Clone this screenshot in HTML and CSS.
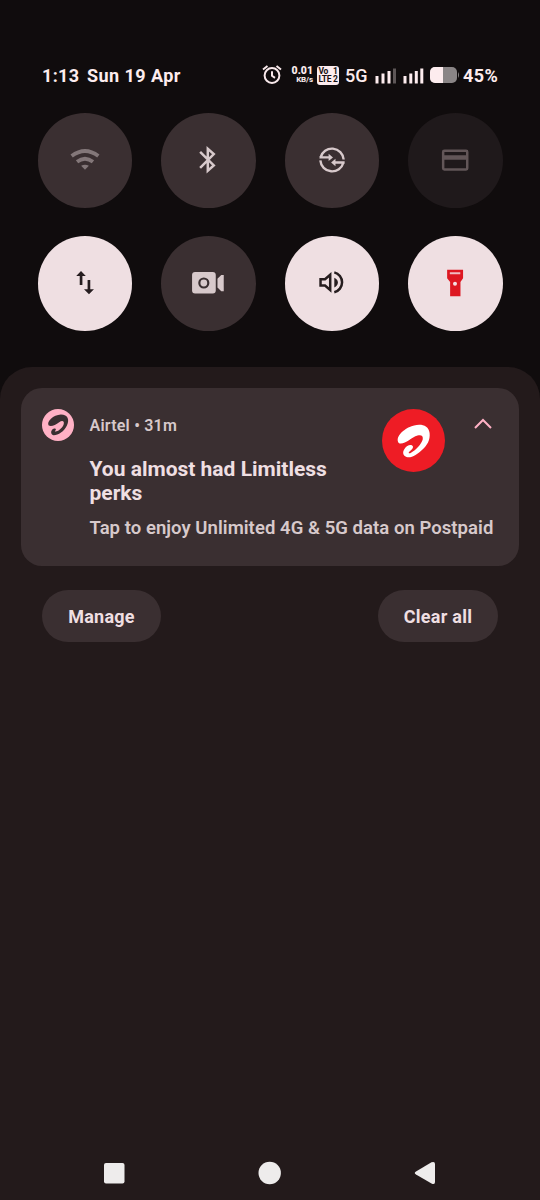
FILE: index.html
```html
<!DOCTYPE html>
<html lang="en">
<head>
<meta charset="utf-8">
<title>Notifications</title>
<link rel="stylesheet" href="styles.css">
</head>
<body>
<div class="screen">
  <header class="status">
    <span class="time">1:13</span>
    <span class="date">Sun 19 Apr</span>
    <svg class="alarm" width="20" height="20" viewBox="0 0 20 20" fill="none" stroke="#f8e8ea" stroke-width="2"><circle cx="10" cy="10.500" r="7.400"/><path d="M10 6.300V10.800L13 12.800M1 4.500L5.500 1M19 4.500L14.500 1"/></svg>
    <span class="speed"><b>0.01</b><small>KB/s</small></span>
    <span class="volte"><span>Vo</span><span>1</span><span>LTE</span><span>2</span></span>
    <span class="net">5G</span>
    <svg class="signals" width="49" height="17" viewBox="0 0 49 17" fill="#fdecee"><path d="M.5 9h3v7.500h-3zM6.500 6.500h3v10h-3zM12.500 4h3v12.500h-3zM28.500 9h3v7.500h-3zM34.300 6.500h3v10h-3zM39.800 4h3v12.500h-3zM45.300 1.500h3v15h-3z"/><path fill="#5d5657" d="M18 1.500h3v15h-3z"/></svg>
    <svg class="battery" width="29" height="16" viewBox="0 0 29 16"><rect width="27" height="16" rx="5" fill="#8a8586"/><path d="M13 0H5a5 5 0 0 0-5 5v6a5 5 0 0 0 5 5h8z" fill="#fdecee"/><path d="M28 5q2 3 0 6z" fill="#8a8586"/></svg>
    <span class="percent">45%</span>
  </header>

  <main class="tiles">
    <div class="tile"><svg viewBox="0 0 95 95" fill="none" stroke="#837779" stroke-width="3.800"><path d="M33.800 43.200Q47.200 33 60.600 43.200M39.200 49Q47.200 42.800 55.200 49"/><path d="M43.300 53Q47.200 50.800 51.100 53L47.200 57Z" fill="#837779" stroke="none"/></svg></div>
    <div class="tile"><svg viewBox="0 0 95 95" fill="none" stroke="#d7c9cb" stroke-width="2.500"><path d="M39.300 39L53 52.700L47 58V36L53 41.300L39.300 55"/></svg></div>
    <div class="tile"><svg viewBox="0 0 95 95" fill="none" stroke="#d7c9cb" stroke-width="2.400"><path d="M35.700 44.600A11.800 11.800 0 0 1 58.900 46.700M34.600 44.600H44.500M58.700 49.700A11.800 11.800 0 0 1 35.500 47.600M59.900 49.700H50"/><path d="M43.800 40.900L48.200 44.600L43.800 48.300ZM50.700 46L46.300 49.700L50.700 53.400Z" fill="#d7c9cb" stroke="none"/></svg></div>
    <div class="tile faint"><svg viewBox="0 0 95 95" fill="none" stroke="#625658" stroke-width="2.500"><rect x="35.300" y="38" width="24.200" height="18.800" rx="1.200"/><path d="M35.300 44.600h24.200" stroke-width="4.500"/></svg></div>
    <div class="tile on"><svg viewBox="0 0 95 95" fill="#261d1f"><path d="M43.200 35.200L48 40.200H44.600V49.300H41.900V40.200H38.400ZM51.200 58.500L46.200 53.400H49.800V44.200H52.500V53.400H56.200Z"/></svg></div>
    <div class="tile"><svg viewBox="0 0 95 95" fill="#d7c9cb"><rect x="31.200" y="36.200" width="23.800" height="21.500" rx="3"/><path d="M56.700 43L60.500 39.200H63V55.500H60.500L56.700 51.700Z"/><circle cx="43" cy="47.200" r="4.500" fill="none" stroke="#3a2f31" stroke-width="2.200"/></svg></div>
    <div class="tile on"><svg viewBox="0 0 95 95" fill="none" stroke="#261d1f" stroke-width="2.500"><path d="M35.700 43.500H40.200L45.400 39V54.200L40.200 49.800H35.700ZM49.500 36.500A10.300 10.300 0 0 1 49.500 56.500"/><path d="M49.500 42Q53.100 43.600 53.100 46.800T49.500 51.600Z" fill="#261d1f" stroke="none"/></svg></div>
    <div class="tile on"><svg viewBox="0 0 95 95"><path fill="#dd1721" d="M39.300 33.800H55.300V42.500L52.700 46.200V60.500H42.300V46.200L39.300 42.500Z"/><path fill="#efbdc2" d="M42 36.500h10.500v1.900H42z"/><circle cx="47.200" cy="47.900" r="2" fill="#f4dfe2"/></svg></div>
  </main>

  <section class="panel">
    <article class="card">
      <svg class="app-icon" viewBox="126 147 95 95"><circle cx="173.500" cy="194.500" r="47.500" fill="#ffb1c5"/><path fill="#3a2f31" d="M146 196C138 184 160 164 182 163C204 163 208 180 200 196C192 214 172 226 160 225C150 222 152 210 160 206C167 203 170 207 164 213C168 217 184 208 190 194C194 182 186 180 177 186C166 194 154 200 146 196Z"/></svg>
      <div class="message">
        <div class="source">Airtel • 31m</div>
        <h1>You almost had Limitless<br>perks</h1>
        <p>Tap to enjoy Unlimited 4G &amp; 5G data on Postpaid</p>
      </div>
      <svg class="large-icon" viewBox="0 0 63 63"><circle cx="31.500" cy="31.500" r="31.500" fill="#ee1c25"/><path fill="#fff" d="M17 34.300C12.500 28.500 21 21 27 18.200C36 14 46.500 14.800 47.600 24C48.400 31 45 36.500 40.500 40.500C35.500 45.500 29 49.500 24.500 48C20.500 46.500 20.300 42.500 22.800 39.500C25 35.600 29.500 35 30.900 37.200C31.500 39 29.500 41 27.500 42.400C25.800 44 27 44.800 29 43.700C34 41 39.500 35 40.700 30.500C41.500 26.500 39 25.500 35.500 26.500C29 28.300 23 36 17 34.300Z"/></svg>
      <svg class="chevron" width="18" height="12" viewBox="0 0 18 12" fill="none" stroke="#ffb1c5" stroke-width="2"><path d="M1 10L9 2L17 10"/></svg>
    </article>
    <div class="actions"><button class="manage">Manage</button><button class="clear">Clear all</button></div>
  </section>

  <nav class="nav">
    <svg width="332" height="24" viewBox="0 0 332 24" fill="#eeecec"><rect x="0" y="2" width="20.500" height="20.500" rx="2"/><circle cx="165.700" cy="12" r="11.200"/><path d="M312 10.500L327.500 1.300Q331 0 331 3V21Q331 24 327.500 22.500L312 13.500Q309.500 12 312 10.500Z"/></svg>
  </nav>
</div>
</body>
</html>
```
FILE: styles.css
```css
* { box-sizing: border-box; }
body { margin: 0; background: #100c0d; font-family: Roboto, sans-serif; }
.screen { width: 540px; height: 1200px; display: flex; flex-direction: column; overflow: hidden; }

.status { height: 113px; padding: 37px 0 0 42px; display: flex; align-items: center; color: #fdecee; font-size: 18px; font-weight: 700; line-height: 20px; white-space: nowrap; }
.status > * { flex: none; }
.time, .date, .net, .percent { padding-top: 1px; }
.time { width: 45px; letter-spacing: .3px; }
.date { width: 175px; letter-spacing: .45px; }
.alarm { width: 20px; margin-right: 9px; }
.speed { width: 26px; display: flex; flex-direction: column; align-items: flex-end; padding-right: 4px; }
.speed b { font-size: 10.500px; line-height: 10px; }
.speed small { font-size: 8px; line-height: 8px; letter-spacing: -.1px; }
.volte { width: 22px; height: 19px; border-radius: 3px; background: #fdecee; color: #151011; display: grid; grid-template-columns: 1fr auto; align-content: center; padding: 0 1.500px; font-size: 8.500px; line-height: 8px; letter-spacing: -.3px; }
.volte span:nth-child(even) { text-align: right; }
.net { width: 30px; padding-left: 6px; font-weight: 500; }
.signals { margin-left: 6px; }
.battery { margin-left: 6px; }
.percent { margin-left: 4px; letter-spacing: .4px; }

.tiles { padding-left: 37.500px; display: grid; grid-template-columns: repeat(4, 94.600px); gap: 28.800px 29px; height: 254px; align-content: start; }
.tile { width: 94.600px; height: 94.600px; }
.tile svg { display: block; width: 100%; height: 100%; border-radius: 50%; background: #3a2f31; }
.faint svg { background: #1f191b; }
.on svg { background: #efdfe2; }

.panel { flex: 1; background: #231a1b; border-radius: 32px 32px 0 0; padding: 21px 21px 0; }
.card { height: 178px; border-radius: 21px; background: #3a2f31; padding: 21px 21px 21px 20.700px; display: flex; align-items: flex-start; }
.app-icon { flex: none; width: 32px; height: 32px; margin-right: 15.800px; }
.message { width: 293px; flex: none; white-space: nowrap; }
.source { margin-top: 7px; font-size: 16px; line-height: 20px; font-weight: 600; letter-spacing: .22px; color: #d7c9cb; }
h1 { margin: 21px 0 0; font-size: 21px; line-height: 24px; font-weight: 700; color: #efdfe2; }
p { margin: 12px 0 0; font-size: 18.500px; line-height: 22px; font-weight: 600; letter-spacing: .05px; color: #d7c9cb; }
.large-icon { flex: none; width: 63px; height: 63px; }
.chevron { margin: 9px 0 0 28.500px; flex: none; }
.actions { display: flex; justify-content: space-between; padding: 24px 21px 0; }
button { height: 52px; border: 0; border-radius: 26px; padding: 0; background: #3a2f31; color: #efdfe2; font: 700 18px Roboto, sans-serif; letter-spacing: .25px; }
.manage { width: 119px; }
.clear { width: 120px; }
.nav { height: 40px; background: #231a1b; padding: .6px 0 0 104px; }
.nav svg { display: block; }
```
